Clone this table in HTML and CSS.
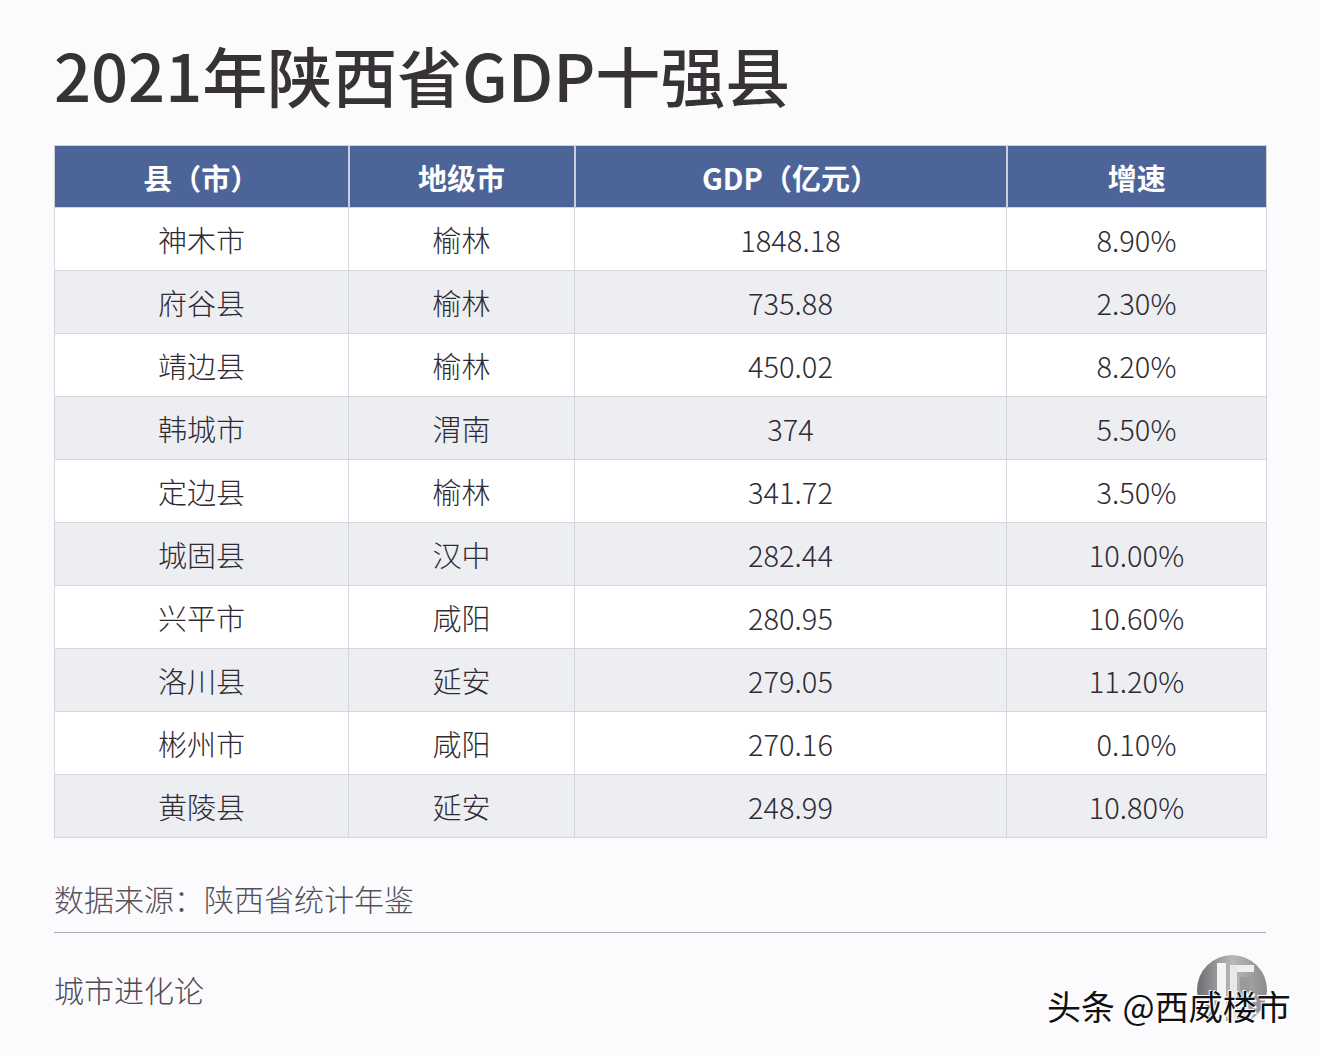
FILE: index.html
```html
<!DOCTYPE html>
<html lang="zh-CN">
<head>
<meta charset="utf-8">
<title>2021年陕西省GDP十强县</title>
<link rel="stylesheet" href="styles.css">
</head>
<body>
<main class="page">
  <h1 class="title">2021年陕西省GDP十强县</h1>
  <table class="gdp">
    <colgroup>
      <col class="c1"><col class="c2"><col class="c3"><col class="c4">
    </colgroup>
    <thead>
      <tr><th>县（市）</th><th>地级市</th><th>GDP（亿元）</th><th>增速</th></tr>
    </thead>
    <tbody>
      <tr><td>神木市</td><td>榆林</td><td>1848.18</td><td>8.90%</td></tr>
      <tr><td>府谷县</td><td>榆林</td><td>735.88</td><td>2.30%</td></tr>
      <tr><td>靖边县</td><td>榆林</td><td>450.02</td><td>8.20%</td></tr>
      <tr><td>韩城市</td><td>渭南</td><td>374</td><td>5.50%</td></tr>
      <tr><td>定边县</td><td>榆林</td><td>341.72</td><td>3.50%</td></tr>
      <tr><td>城固县</td><td>汉中</td><td>282.44</td><td>10.00%</td></tr>
      <tr><td>兴平市</td><td>咸阳</td><td>280.95</td><td>10.60%</td></tr>
      <tr><td>洛川县</td><td>延安</td><td>279.05</td><td>11.20%</td></tr>
      <tr><td>彬州市</td><td>咸阳</td><td>270.16</td><td>0.10%</td></tr>
      <tr><td>黄陵县</td><td>延安</td><td>248.99</td><td>10.80%</td></tr>
    </tbody>
  </table>
  <p class="source">数据来源：陕西省统计年鉴</p>
  <hr class="rule">
  <p class="brand">城市进化论</p>
</main>
<div class="logo">
  <svg width="70" height="66" viewBox="0 0 70 66" aria-hidden="true">
    <defs>
      <linearGradient id="lg" x1="0" y1="0" x2="1" y2="0">
        <stop offset="0" stop-color="#6e6e70"/>
        <stop offset="0.5" stop-color="#b9b9bb"/>
        <stop offset="1" stop-color="#8a8a8c"/>
      </linearGradient>
    </defs>
    <circle cx="35" cy="35" r="35" fill="url(#lg)"/>
    <rect x="20" y="8" width="9" height="58" fill="#f4f4f4"/>
    <rect x="33" y="10" width="24" height="7" fill="#eeeeee"/>
    <rect x="33" y="10" width="7" height="56" fill="#e8e8e8"/>
    <rect x="43" y="22" width="10" height="14" fill="#9a9a9c"/>
  </svg>
</div>
<div class="watermark">头条 @西威楼市</div>
</body>
</html>
```
FILE: styles.css
```css
html, body {
  margin: 0;
  padding: 0;
  background: #fbfbfd;
}
body {
  width: 1320px;
  height: 1056px;
  overflow: hidden;
  position: relative;
  font-family: "Noto Sans CJK SC", "Noto Sans", sans-serif;
  color: #37333a;
}
.page {
  padding: 34px 54px 0 54px;
}
.title {
  margin: 0;
  font-size: 65px;
  line-height: 80px;
  font-weight: 500;
  color: #363236;
}
.gdp {
  margin-top: 31px;
  width: 1212px;
  border-collapse: collapse;
  table-layout: fixed;
  border: 1px solid #cfd3d9;
}
.c1 { width: 294px; }
.c2 { width: 226px; }
.c3 { width: 432px; }
.c4 { width: 260px; }
.gdp th {
  height: 61px;
  padding: 0;
  background: #4c6497;
  color: #ffffff;
  font-size: 29px;
  font-weight: 700;
  text-align: center;
  border-left: 2px solid #c7cfdf;
}
.gdp th:first-child { border-left: none; }
.gdp td {
  height: 62px;
  padding: 0;
  font-size: 29px;
  font-weight: 300;
  text-align: center;
  color: #2f2a33;
  border: 1px solid #d3d6dc;
  background: #ffffff;
}
.gdp tbody tr:nth-child(even) td {
  background: #eceef2;
}
.source {
  margin: 40px 0 0 0;
  font-size: 30px;
  line-height: 40px;
  font-weight: 300;
  color: #55505a;
}
.rule {
  margin: 14px 0 0 0;
  width: 1212px;
  border: none;
  border-top: 1px solid #a9abb0;
  height: 0;
}
.brand {
  margin: 36px 0 0 0;
  font-size: 30px;
  line-height: 40px;
  font-weight: 300;
  color: #4f4a55;
}
.logo {
  position: absolute;
  left: 1197px;
  top: 955px;
  width: 70px;
  height: 66px;
  overflow: hidden;
}
.logo svg { display: block; }
.watermark {
  position: absolute;
  left: 1047px;
  top: 984px;
  font-size: 34px;
  line-height: 44px;
  color: #111111;
  white-space: nowrap;
  text-shadow: 1px 1px 0 #ffffff, -1px -1px 0 #ffffff, 2px 2px 1px rgba(255,255,255,0.9);
}
```
